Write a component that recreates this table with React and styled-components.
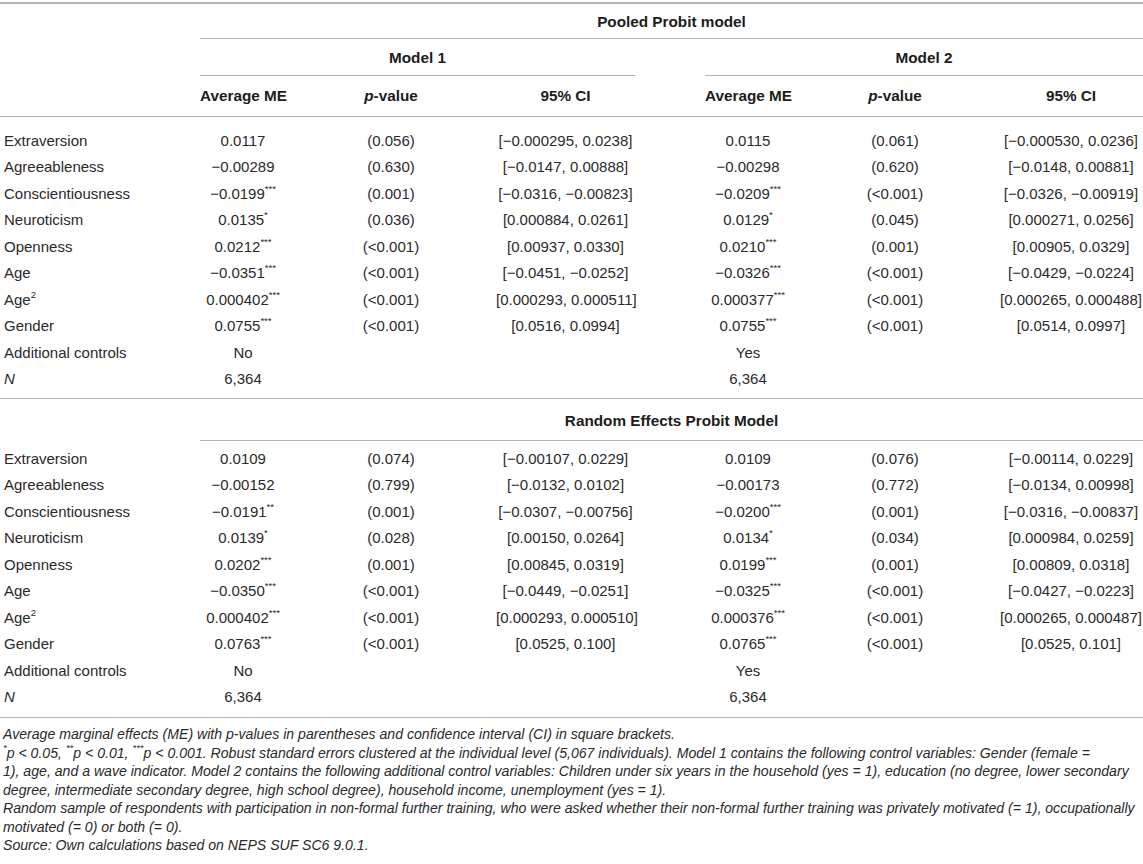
import React from "react"
import styled, { createGlobalStyle } from "styled-components"

const GlobalStyle = createGlobalStyle`
  *, *::before, *::after {
    box-sizing: border-box;
  }
  body {
    margin: 0;
    background: #ffffff;
    font-family: "Liberation Sans", Arial, sans-serif;
    color: #2a2a2a;
  }
`

const COLUMNS = "200px 86px 210px 139px 70px 86px 208px 144px"
const RULE = "1.5px solid #b5b5b5"

const Page = styled.div`
  width: 1143px;
  padding-top: 2px;
`

const Table = styled.div`
  border-top: 2px solid #b3b3b3;
`

const Row = styled.div`
  display: grid;
  grid-template-columns: ${COLUMNS};
  align-items: center;
  height: ${props => props.h || 26.5}px;
  border-bottom: ${props => (props.rule ? RULE : "none")};
`

const Body = styled.div`
  padding: ${props => props.pt}px 0 ${props => props.pb}px;
  border-bottom: ${RULE};
`

const SpanHead = styled.div`
  grid-column: ${props => props.span};
  align-self: stretch;
  display: flex;
  align-items: center;
  justify-content: center;
  padding-top: ${props => props.pt || 0}px;
  font-weight: 700;
  font-size: 15.3px;
  color: #1c1c1c;
  border-bottom: ${props => (props.rule ? RULE : "none")};
`

const ColHead = styled.div`
  text-align: center;
  white-space: nowrap;
  font-weight: 700;
  font-size: 15.3px;
  color: #1c1c1c;
  grid-column: ${props => props.col};
`

const Label = styled.div`
  padding-left: 4px;
  font-size: 15px;
  grid-column: 1;
  white-space: nowrap;
`

const Cell = styled.div`
  text-align: center;
  font-size: 15px;
  white-space: nowrap;
  grid-column: ${props => props.col};
`

const Stars = styled.sup`
  font-size: 9.5px;
  line-height: 0;
  position: relative;
  top: -1px;
`

const Notes = styled.div`
  padding: 7px 0 0 3px;
  font-size: 14.1px;
  font-style: italic;
  line-height: 18.5px;
  color: #2a2a2a;
`

const NoteLine = styled.div`
  white-space: nowrap;
`

const Value = ({ v }) => {
  if (!v) return null
  const m = v.match(/^(.*?)(\*+)$/)
  if (!m) return v
  return (
    <>
      {m[1]}
      <Stars>{m[2]}</Stars>
    </>
  )
}

const RowLabel = ({ name }) => {
  if (name === "Age2")
    return (
      <Label>
        Age<Stars>2</Stars>
      </Label>
    )
  if (name === "N")
    return (
      <Label>
        <i>N</i>
      </Label>
    )
  return <Label>{name}</Label>
}

const pooled = [
  ["Extraversion", "0.0117", "(0.056)", "[−0.000295, 0.0238]", "0.0115", "(0.061)", "[−0.000530, 0.0236]"],
  ["Agreeableness", "−0.00289", "(0.630)", "[−0.0147, 0.00888]", "−0.00298", "(0.620)", "[−0.0148, 0.00881]"],
  ["Conscientiousness", "−0.0199***", "(0.001)", "[−0.0316, −0.00823]", "−0.0209***", "(<0.001)", "[−0.0326, −0.00919]"],
  ["Neuroticism", "0.0135*", "(0.036)", "[0.000884, 0.0261]", "0.0129*", "(0.045)", "[0.000271, 0.0256]"],
  ["Openness", "0.0212***", "(<0.001)", "[0.00937, 0.0330]", "0.0210***", "(0.001)", "[0.00905, 0.0329]"],
  ["Age", "−0.0351***", "(<0.001)", "[−0.0451, −0.0252]", "−0.0326***", "(<0.001)", "[−0.0429, −0.0224]"],
  ["Age2", "0.000402***", "(<0.001)", "[0.000293, 0.000511]", "0.000377***", "(<0.001)", "[0.000265, 0.000488]"],
  ["Gender", "0.0755***", "(<0.001)", "[0.0516, 0.0994]", "0.0755***", "(<0.001)", "[0.0514, 0.0997]"],
  ["Additional controls", "No", "", "", "Yes", "", ""],
  ["N", "6,364", "", "", "6,364", "", ""],
]

const random = [
  ["Extraversion", "0.0109", "(0.074)", "[−0.00107, 0.0229]", "0.0109", "(0.076)", "[−0.00114, 0.0229]"],
  ["Agreeableness", "−0.00152", "(0.799)", "[−0.0132, 0.0102]", "−0.00173", "(0.772)", "[−0.0134, 0.00998]"],
  ["Conscientiousness", "−0.0191**", "(0.001)", "[−0.0307, −0.00756]", "−0.0200***", "(0.001)", "[−0.0316, −0.00837]"],
  ["Neuroticism", "0.0139*", "(0.028)", "[0.00150, 0.0264]", "0.0134*", "(0.034)", "[0.000984, 0.0259]"],
  ["Openness", "0.0202***", "(0.001)", "[0.00845, 0.0319]", "0.0199***", "(0.001)", "[0.00809, 0.0318]"],
  ["Age", "−0.0350***", "(<0.001)", "[−0.0449, −0.0251]", "−0.0325***", "(<0.001)", "[−0.0427, −0.0223]"],
  ["Age2", "0.000402***", "(<0.001)", "[0.000293, 0.000510]", "0.000376***", "(<0.001)", "[0.000265, 0.000487]"],
  ["Gender", "0.0763***", "(<0.001)", "[0.0525, 0.100]", "0.0765***", "(<0.001)", "[0.0525, 0.101]"],
  ["Additional controls", "No", "", "", "Yes", "", ""],
  ["N", "6,364", "", "", "6,364", "", ""],
]

// data columns skip the gap column (5)
const dataCols = [2, 3, 4, 6, 7, 8]

const DataRows = ({ rows }) =>
  rows.map(r => (
    <Row key={r[0]}>
      <RowLabel name={r[0]} />
      {r.slice(1).map((v, j) => (
        <Cell key={j} col={dataCols[j]}>
          <Value v={v} />
        </Cell>
      ))}
    </Row>
  ))

const App = () => (
  <Page>
    <GlobalStyle />
    <Table>
      <Row h={35}>
        <SpanHead span="2 / 9" pt={2} rule>
          Pooled Probit model
        </SpanHead>
      </Row>
      <Row h={37}>
        <SpanHead span="2 / 5" pt={2} rule>
          Model 1
        </SpanHead>
        <SpanHead span="6 / 9" pt={2} rule>
          Model 2
        </SpanHead>
      </Row>
      <Row h={41} rule>
        <ColHead col={2}>Average ME</ColHead>
        <ColHead col={3}>
          <i>p</i>-value
        </ColHead>
        <ColHead col={4}>95% CI</ColHead>
        <ColHead col={6}>Average ME</ColHead>
        <ColHead col={7}>
          <i>p</i>-value
        </ColHead>
        <ColHead col={8}>95% CI</ColHead>
      </Row>
      <Body pt={10} pb={6}>
        <DataRows rows={pooled} />
      </Body>
      <Row h={42}>
        <SpanHead span="2 / 9" pt={2} rule>
          Random Effects Probit Model
        </SpanHead>
      </Row>
      <Body pt={4} pb={7}>
        <DataRows rows={random} />
      </Body>
    </Table>
    <Notes>
      <NoteLine>
        Average marginal effects (ME) with p-values in parentheses and confidence interval (CI) in square
        brackets.
      </NoteLine>
      <NoteLine>
        <Stars>*</Stars>p &lt; 0.05, <Stars>**</Stars>p &lt; 0.01, <Stars>***</Stars>p &lt; 0.001. Robust
        standard errors clustered at the individual level (5,067 individuals). Model 1 contains the following
        control variables: Gender (female =
      </NoteLine>
      <NoteLine>
        1), age, and a wave indicator. Model 2 contains the following additional control variables: Children
        under six years in the household (yes = 1), education (no degree, lower secondary
      </NoteLine>
      <NoteLine>
        degree, intermediate secondary degree, high school degree), household income, unemployment (yes = 1).
      </NoteLine>
      <NoteLine>
        Random sample of respondents with participation in non-formal further training, who were asked whether
        their non-formal further training was privately motivated (= 1), occupationally
      </NoteLine>
      <NoteLine>motivated (= 0) or both (= 0).</NoteLine>
      <NoteLine>Source: Own calculations based on NEPS SUF SC6 9.0.1.</NoteLine>
    </Notes>
  </Page>
)

export default App
